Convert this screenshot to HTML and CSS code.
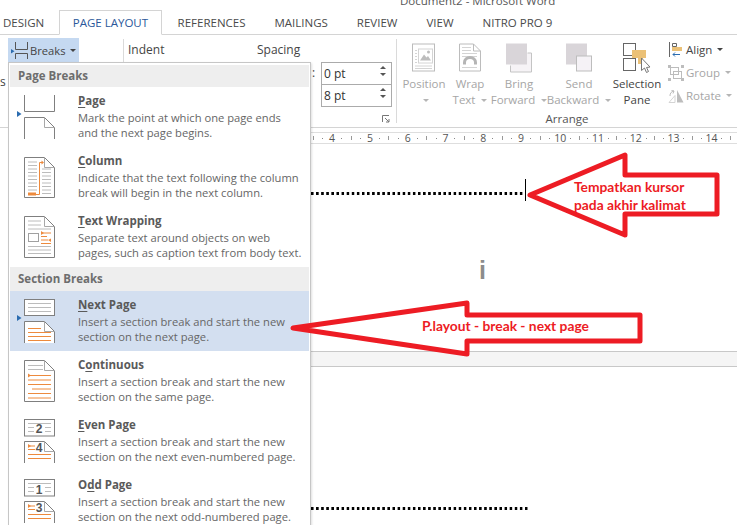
FILE: index.html
```html
<!DOCTYPE html>
<html lang="en">
<head>
<meta charset="utf-8">
<title>Document2 - Microsoft Word</title>
<link rel="stylesheet" href="styles.css">
</head>
<body>
<div class="app">
  <div class="titlebar">Document2 - Microsoft Word</div>
  <nav class="tabs">
    <span class="tab">DESIGN</span>
    <span class="tab active">PAGE LAYOUT</span>
    <span class="tab">REFERENCES</span>
    <span class="tab">MAILINGS</span>
    <span class="tab">REVIEW</span>
    <span class="tab">VIEW</span>
    <span class="tab">NITRO PRO 9</span>
  </nav>

  <section class="ribbon">
    <div class="group-setup">
      <div class="breaks-btn">
        <svg class="breaks-icon" width="18" height="18" viewBox="0 0 18 18"><path class="i-line" d="M4.500 1V8.500H16.500V1M4.500 18V12.500H16.500V18"/><path class="i-blue" d="M0 8V12.500L3.500 10.250Z"/></svg>
        <span>Breaks</span><i class="caret"></i>
      </div>
      <div class="cut-s">s</div>
    </div>
    <div class="group-para">
      <div class="col-indent">Indent</div>
      <div class="col-spacing">
        <div class="spacing-label">Spacing</div>
        <div class="spin-row"><span class="colon">:</span><div class="spin">0 pt<span class="arrows"><i class="up"></i><i class="down"></i></span></div></div>
        <div class="spin-row second"><div class="spin">8 pt<span class="arrows"><i class="up"></i><i class="down"></i></span></div></div>
        <svg class="launcher" width="8" height="8" viewBox="0 0 8 8"><path d="M0.500 7V0.500H7M3 3L7 7M4 7H7V4"/></svg>
      </div>
    </div>
    <div class="group-arrange">
      <div class="arrange-row">
        <div class="big off w-pos">
          <svg width="24" height="29" viewBox="0 0 24 29"><rect class="g" x="0.500" y="0.500" width="22" height="27"/><rect class="gl" x="6.500" y="5.500" width="14" height="14"/><path class="gf" d="M8 17L12 11L14.500 14L16 12.500L19 17Z"/><circle class="gf" cx="16.500" cy="8.500" r="1.500"/><path class="gl" d="M3 7H5M3 10H5M3 13H5M3 16H5M3 19H5M3 22.500H20M3 25H20"/></svg>
          <div class="lab">Position</div><div class="lab"><i class="caret off"></i></div>
        </div>
        <div class="big off w-wrap">
          <svg width="22" height="29" viewBox="0 0 22 29"><path class="g" d="M0.500 0.500H14.500L21.500 7.500V27.500H0.500Z"/><path class="g" d="M14.500 0.500V7.500H21.500"/><path class="gl" d="M3 4H12M3 7H12M3 10H18M3 13H18M3 24H18"/><path class="arch" d="M5.500 21V19A5.500 5 0 0 1 16.500 19V21"/></svg>
          <div class="lab">Wrap</div><div class="lab">Text <i class="caret off"></i></div>
        </div>
        <div class="big off w-bring">
          <svg width="26" height="29" viewBox="0 0 26 29"><path class="g-back" d="M21.500 9.500H25.500V28.500H4.500V22"/><rect class="fillg" x="0" y="0" width="21" height="21"/></svg>
          <div class="lab">Bring</div><div class="lab">Forward <i class="caret off"></i></div>
        </div>
        <div class="big off w-send">
          <svg width="27" height="29" viewBox="0 0 27 29"><rect class="fillg" x="0" y="0" width="21" height="21"/><rect class="front" x="10.500" y="12.500" width="15" height="15"/></svg>
          <div class="lab">Send</div><div class="lab">Backward <i class="caret off"></i></div>
        </div>
        <div class="big w-sel">
          <svg width="28" height="30" viewBox="0 0 28 30"><rect class="dk" x="0.500" y="0.500" width="12" height="12"/><rect class="dk" x="0.500" y="15.500" width="12" height="12"/><path class="or" d="M9 7H23V15H20V21H15V15H9Z"/><path class="curs" d="M18.500 15V27.500L21.500 25L23.500 29.500L25.500 28.500L23.500 24.500L27 24Z"/></svg>
          <div class="lab dark">Selection</div><div class="lab dark">Pane</div>
        </div>
        <div class="stack">
          <div class="small dark">
            <svg width="14" height="16" viewBox="0 0 14 16"><path class="dk" d="M0.500 0V15"/><path class="dk" d="M3.500 1.500H7.500V4.500H3.500Z"/><rect class="orf" x="3" y="5" width="10" height="4"/><path class="blue-s" d="M11 12.500H4M6 10.500L4 12.500L6 14.500"/></svg>
            <span>Align</span><i class="caret"></i>
          </div>
          <div class="small off">
            <svg width="16" height="16" viewBox="0 0 16 16"><rect class="g" x="2.500" y="2.500" width="8" height="7"/><rect class="g" x="5.500" y="6.500" width="8" height="7"/><path class="gf" d="M0 0H3V3H0ZM13 0H16V3H13ZM0 13H3V16H0ZM13 13H16V16H13Z"/></svg>
            <span>Group</span><i class="caret off"></i>
          </div>
          <div class="small off">
            <svg width="16" height="14" viewBox="0 0 16 14"><path class="gl" d="M1 13.500L7 6.500V13.500Z"/><path class="gf" d="M9 1L15.500 13.500H9Z"/><path class="g" d="M2 7A5 5 0 0 1 6 2M6 2L3.500 1.500M6 2L5 4.500"/></svg>
            <span>Rotate</span><i class="caret off"></i>
          </div>
        </div>
      </div>
      <div class="arrange-label">Arrange</div>
    </div>
  </section>

  <div class="ruler">
    <div class="r"><b></b><i class="d"></i><i class="t"></i><i class="d"></i></div>
    <div class="r"><b>4</b><i class="d"></i><i class="t"></i><i class="d"></i></div>
    <div class="r"><b>5</b><i class="d"></i><i class="t"></i><i class="d"></i></div>
    <div class="r"><b>6</b><i class="d"></i><i class="t"></i><i class="d"></i></div>
    <div class="r"><b>7</b><i class="d"></i><i class="t"></i><i class="d"></i></div>
    <div class="r"><b>8</b><i class="d"></i><i class="t"></i><i class="d"></i></div>
    <div class="r"><b>9</b><i class="d"></i><i class="t"></i><i class="d"></i></div>
    <div class="r"><b>10</b><i class="d"></i><i class="t"></i><i class="d"></i></div>
    <div class="r"><b>11</b><i class="d"></i><i class="t"></i><i class="d"></i></div>
    <div class="r"><b>12</b><i class="d"></i><i class="t"></i><i class="d"></i></div>
    <div class="r"><b>13</b><i class="d"></i><i class="t"></i><i class="d"></i></div>
    <div class="r"><b>14</b><i class="d"></i><i class="t"></i><i class="d"></i></div>
  </div>

  <main class="doc">
    <div class="page-one">
      <div class="text-row"><div class="dots"></div><div class="caret-bar"></div></div>
      <div class="ibeam">i</div>
    </div>
    <div class="page-gap"></div>
    <div class="page-two"><div class="dots long"></div></div>
  </main>

  <aside class="menu">
    <div class="menu-head first">Page Breaks</div>

    <div class="item">
      <svg class="ico" width="44" height="60" viewBox="16 0 44 60"><path class="s" d="M24.500 8V24.500H54.500V8"/><path class="s" d="M24.500 52V30.500H44.500L54.500 40.500V52"/><path class="f" d="M44.500 30.500V40.500H54.500"/><path class="m" d="M17 24V30L21.500 27Z"/></svg>
      <div class="txt"><div class="ttl"><u>P</u>age</div><div class="dsc">Mark the point at which one page ends<br>and the next page begins.</div></div>
    </div>

    <div class="item">
      <svg class="ico" width="44" height="60" viewBox="16 0 44 60"><path class="p" d="M24.500 10.500H44.500L54.500 20.500V50.500H24.500Z"/><path class="f" d="M44.500 10.500V20.500H54.500"/><path class="l" d="M28 15H37M28 18.500H37M28 22H37M28 25.500H37M28 29H37M28 32.500H37M28 36H37M28 39.500H37M28 43H37M42 22H51M42 25.500H51M42 29H51M42 32.500H51M42 36H51M42 39.500H51M42 43H51M42 46.500H51"/><rect class="of" x="28" y="45.500" width="8" height="3"/><path class="o" d="M36 47.500H39.500V15.500H42"/><path class="of" d="M41.500 13.500V17.500L44 15.500Z"/></svg>
      <div class="txt"><div class="ttl"><u>C</u>olumn</div><div class="dsc">Indicate that the text following the column<br>break will begin in the next column.</div></div>
    </div>

    <div class="item">
      <svg class="ico" width="44" height="60" viewBox="16 0 44 60"><path class="p" d="M24.500 9.500H44.500L54.500 19.500V50.500H24.500Z"/><path class="f" d="M44.500 9.500V19.500H54.500"/><path class="l" d="M28 14H41M28 18H41M28 22H51M28 39.500H51M28 43H51M28 46.500H51"/><rect class="bx" x="28.500" y="26.500" width="10" height="8"/><path class="o" d="M41 26H51M41 29.500H47M41 33H48M41 36.500H51"/><path class="of" d="M41 24V28L44 26ZM51 31.500V35L48 33Z"/></svg>
      <div class="txt"><div class="ttl"><u>T</u>ext Wrapping</div><div class="dsc">Separate text around objects on web<br>pages, such as caption text from body text.</div></div>
    </div>

    <div class="menu-head">Section Breaks</div>

    <div class="item hl">
      <svg class="ico" width="44" height="60" viewBox="16 0 44 60"><rect class="p" x="24.500" y="8.500" width="30" height="16"/><path class="l" d="M28 12.500H51M28 16.500H51M28 20.500H51"/><path class="pw" d="M24.500 52V30.500H44.500L54.500 40.500V52Z"/><path class="s" d="M24.500 52V30.500H44.500L54.500 40.500V52"/><path class="f" d="M44.500 30.500V40.500H54.500"/><path class="o" d="M28 37.500H41M28 41.500H51M28 45.500H51M28 49.500H51"/><path class="m" d="M17 24V30L21.500 27Z"/></svg>
      <div class="txt"><div class="ttl"><u>N</u>ext Page</div><div class="dsc">Insert a section break and start the new<br>section on the next page.</div></div>
    </div>

    <div class="item">
      <svg class="ico" width="44" height="60" viewBox="16 0 44 60"><path class="p" d="M24.500 9.500H44.500L54.500 19.500V50.500H24.500Z"/><path class="f" d="M44.500 9.500V19.500H54.500"/><path class="l" d="M28 14.500H43M28 18.500H43"/><path class="o" d="M30 24.500H51M28 29H51M28 33.500H51M32 38H51M28 42.500H51M28 47H51"/><path class="of" d="M28 22.500V26.500L31 24.500Z"/></svg>
      <div class="txt"><div class="ttl">C<u>o</u>ntinuous</div><div class="dsc">Insert a section break and start the new<br>section on the same page.</div></div>
    </div>

    <div class="item">
      <svg class="ico" width="44" height="60" viewBox="16 0 44 60"><rect class="p" x="24.500" y="8.500" width="30" height="16.500"/><path class="l" d="M28 12.500H51M28 16.500H34M45 16.500H51M28 20.500H34M45 20.500H51"/><text class="num" x="39" y="22">2</text><path class="pw" d="M24.500 52V30.500H44.500L54.500 40.500V52Z"/><path class="s" d="M24.500 52V30.500H44.500L54.500 40.500V52"/><path class="f" d="M44.500 30.500V40.500H54.500"/><path class="o" d="M30 35H35M28 38.500H35M28 43.500H51M28 47.500H51"/><path class="of" d="M28 33V37L31 35Z"/><text class="num" x="39" y="41">4</text></svg>
      <div class="txt"><div class="ttl"><u>E</u>ven Page</div><div class="dsc">Insert a section break and start the new<br>section on the next even-numbered page.</div></div>
    </div>

    <div class="item">
      <svg class="ico" width="44" height="60" viewBox="16 0 44 60"><rect class="p" x="24.500" y="8.500" width="30" height="16.500"/><path class="l" d="M28 12.500H51M28 16.500H34M45 16.500H51M28 20.500H34M45 20.500H51"/><text class="num" x="39" y="23">1</text><path class="pw" d="M24.500 52V30.500H44.500L54.500 40.500V52Z"/><path class="s" d="M24.500 52V30.500H44.500L54.500 40.500V52"/><path class="f" d="M44.500 30.500V40.500H54.500"/><path class="o" d="M30 35H35M28 38.500H35M28 43.500H51M28 47.500H51"/><path class="of" d="M28 33V37L31 35Z"/><text class="num" x="39" y="41">3</text></svg>
      <div class="txt"><div class="ttl">O<u>d</u>d Page</div><div class="dsc">Insert a section break and start the new<br>section on the next odd-numbered page.</div></div>
    </div>
  </aside>

  <svg class="annot" width="737" height="525" viewBox="0 0 737 525">
    <path class="arrow" d="M530 195L625 155V175H717V214H625V235Z"/>
    <text class="note" x="574" y="192">Tempatkan kursor</text>
    <text class="note" x="574" y="210">pada akhir kalimat</text>
    <path class="arrow" d="M293 328L467 303V315H640V341H467V354Z"/>
    <text class="note" x="422" y="331">P.layout - break - next page</text>
  </svg>
</div>
</body>
</html>
```

FILE: styles.css
```css
* { box-sizing: border-box; }
html, body { margin: 0; padding: 0; height: 525px; overflow: hidden; background: #fff; }
body { font-family: "Open Sans", "Noto Sans", sans-serif; font-size: 12px; color: #444; }
.app { position: relative; width: 737px; height: 525px; overflow: hidden; }

.titlebar { height: 10px; padding-left: 400px; font-size: 11.500px; line-height: 1px; color: #555; overflow: hidden; white-space: nowrap; }

.tabs { display: flex; height: 25px; border-bottom: 1px solid #d4d4d4; padding-left: 3px; }
.tab { font-size: 11.500px; line-height: 25px; color: #4a4a4a; margin-right: 29px; white-space: nowrap; }
.tab.active { color: #2b579a; background: #fff; border: 1px solid #d4d4d4; border-bottom: 1px solid #fff; height: 25px; margin-left: -14px; margin-right: 16px; padding: 0 12.500px; line-height: 23px; }

.ribbon { display: flex; height: 93px; border-bottom: 1px solid #d4d4d4; }
.group-setup { width: 123px; flex: none; position: relative; }
.breaks-btn { display: flex; align-items: center; gap: 1px; margin: 3px 0 0 8px; width: 71px; height: 24px; background: #c5d9f1; padding-left: 3px; font-size: 11.200px; }
.cut-s { margin-top: 12px; line-height: 16px; }
.caret { display: inline-block; width: 0; height: 0; border: 3px solid transparent; border-top: 3px solid #444; border-bottom: 0; margin-left: 3px; vertical-align: middle; }
.caret.off { border-top-color: #b5b5b5; }
.i-line { fill: none; stroke: #555; }
.i-blue { fill: #2b6cb0; }

.group-para { display: flex; width: 274px; flex: none; border-left: 1px solid #dadada; margin: 4px 0; position: relative; height: 84px; border-right: 1px solid #dadada; }
.col-indent { width: 133px; padding: 0 0 0 4px; line-height: 20px; height: 20px; margin-top: 1px; }
.col-spacing { flex: 1; position: relative; }
.spacing-label { line-height: 20px; height: 20px; margin-top: 1px; margin-bottom: 2px; }
.spin-row { display: flex; align-items: center; position: relative; height: 23px; margin-left: 64px; width: 71px; }
.colon { position: absolute; left: -9px; top: 2px; }
.spin { width: 71px; height: 23px; border: 1px solid #ababab; padding-left: 2px; line-height: 21px; position: relative; color: #333; background: #fff; }
.spin-row.second { margin-top: -1px; }
.arrows { position: absolute; right: 5px; top: 3px; display: flex; flex-direction: column; gap: 4px; }
.arrows i { display: block; width: 0; height: 0; border: 3px solid transparent; }
.arrows .up { border-bottom: 3px solid #555; border-top: 0; }
.arrows .down { border-top: 3px solid #555; border-bottom: 0; }
.launcher { position: absolute; right: 6px; bottom: 0; }
.launcher path { fill: none; stroke: #777; }

.group-arrange { flex: 1; display: flex; flex-direction: column; }
.arrange-row { display: flex; height: 77px; padding: 8px 0 0 4px; }
.big { display: flex; flex-direction: column; align-items: center; flex: none; }
.big svg { display: block; height: 30px; margin-bottom: 3px; }
.w-pos { width: 46px; }
.w-wrap { width: 46px; }
.w-bring { width: 52px; }
.w-send { width: 68px; }
.w-sel { width: 48px; }
.lab { font-size: 11.500px; line-height: 16px; height: 16px; white-space: nowrap; color: #a6a6a6; }
.lab.dark { color: #444; }
.arrange-label { text-align: center; font-size: 11.500px; line-height: 16px; margin-left: 4px; width: 332px; color: #555; }
.stack { display: flex; flex-direction: column; margin-left: 7px; margin-top: -5px; }
.small { display: flex; align-items: center; height: 23px; gap: 2px; color: #a6a6a6; white-space: nowrap; font-size: 11.500px; }
.small.dark { color: #444; }
.small svg { width: 16px; flex: none; }
.g { fill: none; stroke: #bcbcbc; }
.gl { fill: none; stroke: #d4d4d4; }
.gf { fill: #bdbdbd; }
.arch { fill: none; stroke: #b5b5b5; stroke-width: 3; }
.g-back { fill: #f6f3f6; stroke: #c4c4c4; }
.fillg { fill: #d9d5d9; }
.front { fill: #f5f2f6; stroke: #bdbdbd; }
.dk { fill: none; stroke: #666; }
.or { fill: #ebc177; }
.orf { fill: #ebc177; }
.curs { fill: #fff; stroke: #777; }
.blue-s { fill: none; stroke: #2b6cb0; }

.ruler { display: flex; height: 12px; margin: 4px 0 0 310px; border-top: 1px solid #dedede; border-bottom: 1px solid #dedede; overflow: hidden; }
.r { flex: none; width: 37.800px; display: grid; grid-template-columns: repeat(4, 1fr); justify-items: center; align-items: center; }
.r:first-child { margin-left: -20.400px; }
.r b { font-weight: 400; font-size: 10.500px; line-height: 10px; color: #555; }
.r .d { width: 1px; height: 1px; background: #888; }
.r .t { width: 1px; height: 4px; background: #999; }

.doc { display: flex; flex-direction: column; }
.page-one { height: 207px; padding: 35px 0 0 311px; }
.text-row { display: flex; align-items: center; height: 22px; }
.dots { width: 214px; height: 3px; background: linear-gradient(90deg, #000 2.500px, transparent 2.500px) 0 0 / 5.100px 3px repeat-x; margin-top: 6px; }
.caret-bar { width: 1px; height: 22px; background: #000; }
.ibeam { margin: 56px 0 0 168px; font-size: 25px; font-weight: 700; line-height: 26px; color: #8c8c8c; font-family: "Liberation Sans", sans-serif; }
.page-gap { height: 16px; margin-left: 311px; background: #f5f5f5; border-top: 1px solid #c8c8c8; border-bottom: 1px solid #c8c8c8; }
.page-two { padding: 140px 0 0 311px; }
.dots.long { width: 219px; margin-top: 0; }

.menu { position: absolute; left: 8px; top: 62px; width: 303px; height: 480px; background: #fff; border: 1px solid #c6c6c6; padding: 2px 1px 0; box-shadow: 1px 1px 2px rgba(0,0,0,.12); }
.menu-head { height: 24px; background: #eeeeee; padding-left: 8px; font-weight: 700; font-size: 11.500px; line-height: 24px; color: #6d6d6d; }
.menu-head.first { height: 22px; line-height: 21px; }
.item { display: flex; height: 60px; position: relative; }
.item.hl { background: #d3dff0; }
.ico { position: absolute; left: 6px; top: 0; }
.txt { margin-left: 68px; padding-top: 6px; }
.ttl { font-weight: 700; font-size: 11.500px; line-height: 16px; margin-bottom: 1px; color: #5a5a5a; white-space: nowrap; }
.ttl u { text-underline-offset: 2px; }
.dsc { font-size: 11.200px; line-height: 15px; color: #666; white-space: nowrap; }
.s { fill: none; stroke: #7f7f7f; }
.p { fill: #fff; stroke: #7f7f7f; }
.pw { fill: #fff; }
.f { fill: none; stroke: #a8a8a8; }
.l { fill: none; stroke: #bcbcbc; }
.o { fill: none; stroke: #ed8a3d; }
.of { fill: #ed8a3d; }
.m { fill: #2b6cb0; }
.bx { fill: none; stroke: #a0a0a0; }
.num { font-family: "Liberation Sans", sans-serif; font-weight: 700; font-size: 12px; fill: #555; text-anchor: middle; }

.annot { position: absolute; left: 0; top: 0; pointer-events: none; }
.arrow { fill: none; stroke: #ed1c24; stroke-width: 5; stroke-linejoin: round; }
.note { font-family: Lato, "Open Sans", sans-serif; font-weight: 700; font-size: 13.800px; fill: #ed1c24; }
```
